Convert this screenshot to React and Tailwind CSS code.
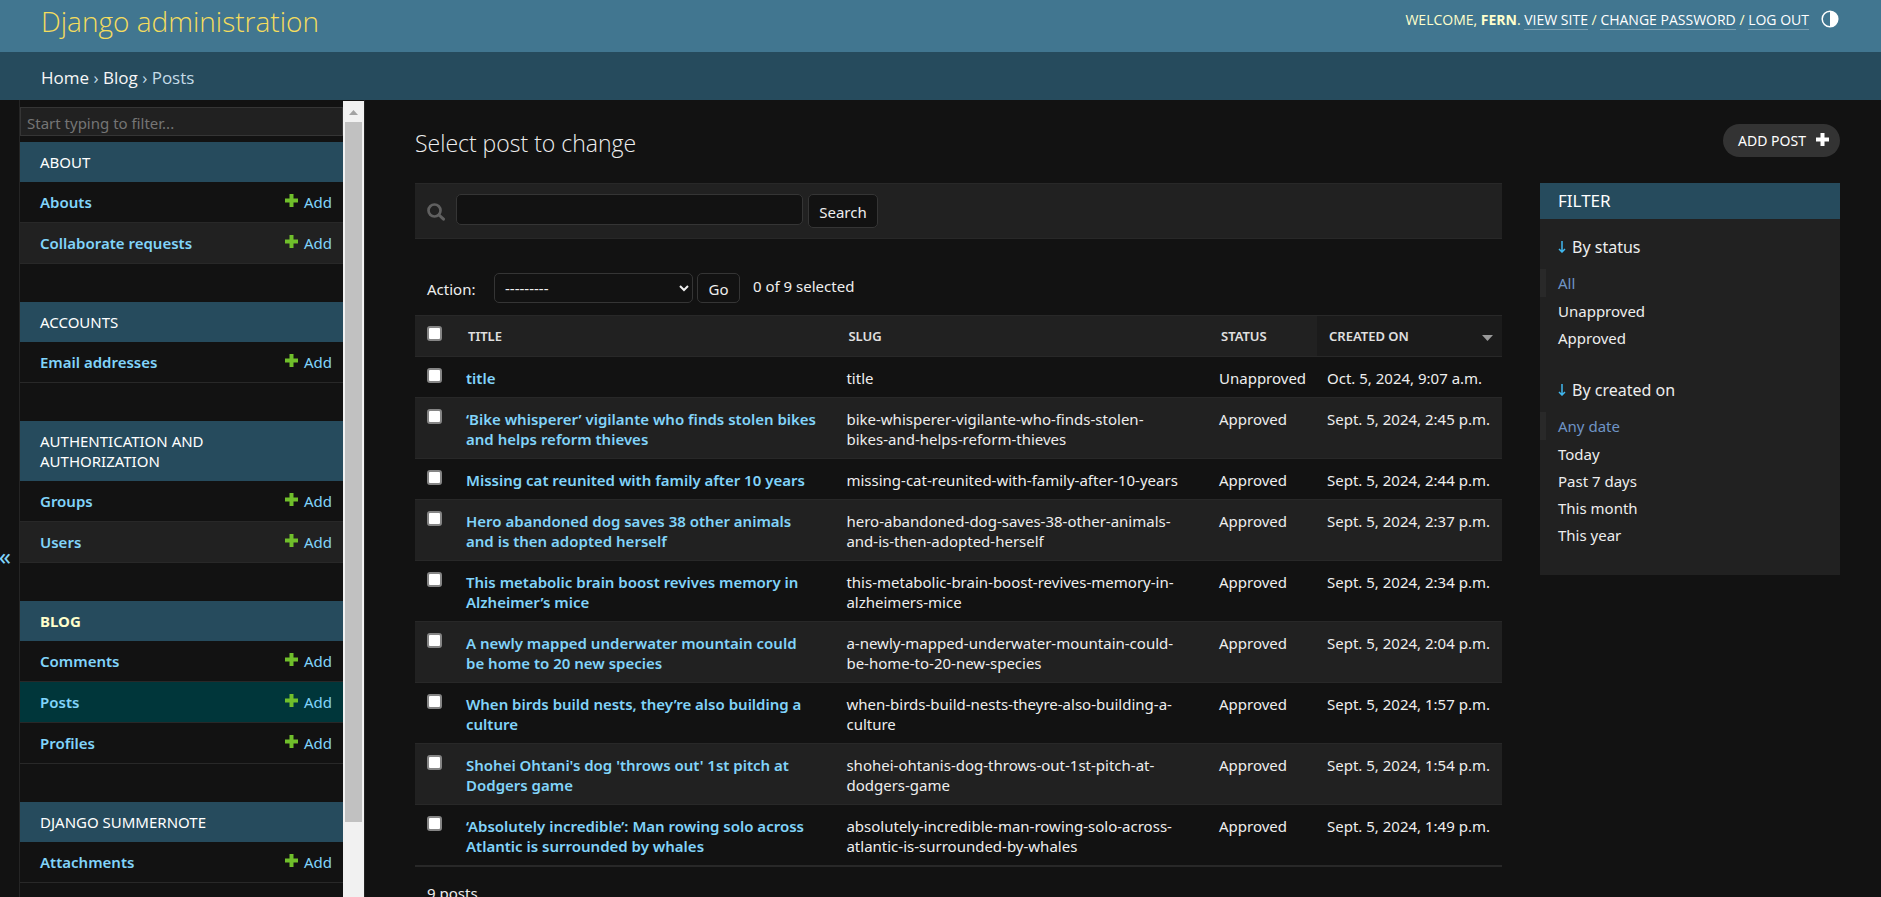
import React from "react";

const apps = [
  { name: "About", models: ["Abouts", "Collaborate requests"] },
  { name: "Accounts", models: ["Email addresses"] },
  { name: "Authentication and Authorization", models: ["Groups", "Users"] },
  { name: "Blog", models: ["Comments", "Posts", "Profiles"], current: true },
  { name: "Django Summernote", models: ["Attachments"] },
];

const posts = [
  ["title", "title", "Unapproved", "Oct. 5, 2024, 9:07 a.m."],
  ["‘Bike whisperer’ vigilante who finds stolen bikes and helps reform thieves", "bike-whisperer-vigilante-who-finds-stolen-bikes-and-helps-reform-thieves", "Approved", "Sept. 5, 2024, 2:45 p.m."],
  ["Missing cat reunited with family after 10 years", "missing-cat-reunited-with-family-after-10-years", "Approved", "Sept. 5, 2024, 2:44 p.m."],
  ["Hero abandoned dog saves 38 other animals and is then adopted herself", "hero-abandoned-dog-saves-38-other-animals-and-is-then-adopted-herself", "Approved", "Sept. 5, 2024, 2:37 p.m."],
  ["This metabolic brain boost revives memory in Alzheimer’s mice", "this-metabolic-brain-boost-revives-memory-in-alzheimers-mice", "Approved", "Sept. 5, 2024, 2:34 p.m."],
  ["A newly mapped underwater mountain could be home to 20 new species", "a-newly-mapped-underwater-mountain-could-be-home-to-20-new-species", "Approved", "Sept. 5, 2024, 2:04 p.m."],
  ["When birds build nests, they’re also building a culture", "when-birds-build-nests-theyre-also-building-a-culture", "Approved", "Sept. 5, 2024, 1:57 p.m."],
  ["Shohei Ohtani's dog 'throws out' 1st pitch at Dodgers game", "shohei-ohtanis-dog-throws-out-1st-pitch-at-dodgers-game", "Approved", "Sept. 5, 2024, 1:54 p.m."],
  ["‘Absolutely incredible’: Man rowing solo across Atlantic is surrounded by whales", "absolutely-incredible-man-rowing-solo-across-atlantic-is-surrounded-by-whales", "Approved", "Sept. 5, 2024, 1:49 p.m."],
];

const filters = [
  { title: "By status", options: ["All", "Unapproved", "Approved"] },
  { title: "By created on", options: ["Any date", "Today", "Past 7 days", "This month", "This year"] },
];

function Plus({ className }) {
  return (
    <svg className={className} viewBox="0 0 13 13" aria-hidden="true">
      <path d="M4.500 0h4v4.500H13v4H8.500V13h-4V8.500H0v-4h4.500z" fill="currentColor" />
    </svg>
  );
}

function Header() {
  const link = "border-b border-white/30 text-white hover:border-white";
  return (
    <header className="flex h-[52px] shrink-0 items-start justify-between bg-[#417690] pr-[42px] pl-[41px] text-[#ffc]">
      <h1 className="font-['Open_Sans',sans-serif] text-[28px] leading-[42px] font-light text-[#f5dd5d]">
        <a href="#home">Django administration</a>
      </h1>
      <div className="flex items-center pt-[10px] font-['Open_Sans',sans-serif] text-[14px] leading-[17px] uppercase">
        <div>
          Welcome, <strong className="font-bold">Fern</strong>. <a className={link} href="#site">View site</a> / <a className={link} href="#password">Change password</a> / <a className={link} href="#logout">Log out</a>
        </div>
        <button type="button" aria-label="Toggle theme" className="ml-3 text-white">
          <svg className="size-[18px]" viewBox="0 0 18 18" aria-hidden="true">
            <circle cx="9" cy="9" r="7.800" fill="none" stroke="currentColor" strokeWidth="1.500" />
            <path d="M9 1.200a7.800 7.800 0 0 1 0 15.600z" fill="currentColor" />
          </svg>
        </button>
      </div>
    </header>
  );
}

function Sidebar() {
  return (
    <div className="flex w-[365px] shrink-0 overflow-hidden border-r border-[#252525]">
      <button type="button" aria-label="Toggle navigation" className="flex w-5 shrink-0 items-center justify-end border-r border-[#252525] pr-2 pt-[114px] text-[24px] text-[#81d4fa]">
        «
      </button>
      <nav aria-label="Sidebar" className="min-w-0 flex-1 overflow-hidden">
        <input type="search" aria-label="Filter navigation items" placeholder="Start typing to filter..." className="mt-[7px] mb-[6px] block h-[29px] w-full border border-[#353535] bg-[#212121] px-[6px] pt-[2px] text-[15px] text-[#eee] placeholder:text-[#757575]" />
        {apps.map((app) => (
          <section key={app.name} className="mb-[38px]">
            <h2 className={"bg-[#264b5d] px-5 py-[10px] text-[15px] leading-5 uppercase " + (app.current ? "font-bold text-[#ffc]" : "text-white")}>
              <a href="#app" className="block max-w-[220px]">{app.name}</a>
            </h2>
            <ul>
              {app.models.map((m, i) => (
                <li key={m} className={"flex items-center justify-between border-b border-[#282828] pr-[11px] pl-5 text-[15px] leading-[40px] text-[#81d4fa] " + (m === "Posts" ? "bg-[#00363a]" : i === 1 ? "bg-[#212121]" : "")}>
                  <a href="#model" className="font-semibold">{m}</a>
                  <a href="#add" className="flex items-center gap-[6px]">
                    <Plus className="mb-1 size-[13px] text-[#70bf2b]" />
                    Add
                  </a>
                </li>
              ))}
            </ul>
          </section>
        ))}
      </nav>
      <div aria-hidden="true" className="mt-px flex w-[21px] shrink-0 flex-col items-center bg-[#f1f1f1]">
        <svg className="h-[21px] w-[21px] shrink-0" viewBox="0 0 21 21"><path d="M6 14l4.500-5 4.500 5z" fill="#a3a3a3" /></svg>
        <div className="h-[88%] w-[17px] bg-[#c1c1c1]" />
      </div>
    </div>
  );
}

function Changelist() {
  const th = "px-3 text-left font-semibold";
  const td = "px-[10px] pt-[11px] pb-[9px]";
  const check = "block size-[15px] appearance-none rounded-[3px] border-2 border-[#858585] bg-white checked:bg-[#417690]";
  return (
    <div className="min-w-0 flex-1">
      <form className="flex h-[56px] items-start border-y border-[#282828] bg-[#212121] pt-[10px] pl-3">
        <label htmlFor="searchbar" aria-label="Search posts" className="mt-[9px] mr-[11px] text-[#606060]">
          <svg className="size-[18px]" viewBox="0 0 18 18" fill="none" stroke="currentColor" aria-hidden="true">
            <circle cx="7.500" cy="7.500" r="6" strokeWidth="2.700" />
            <path d="M12 12l4.500 4.200" strokeWidth="3" strokeLinecap="round" />
          </svg>
        </label>
        <input id="searchbar" type="text" className="h-[31px] w-[347px] rounded-[5px] border border-[#353535] bg-[#121212] px-2 text-[15px]" />
        <button type="submit" className="ml-[5px] h-[34px] w-[70px] rounded-[5px] border border-[#353535] bg-[#121212] pt-[2px] text-[15px]">Search</button>
      </form>
      <div className="flex h-[76px] items-start pt-[34px] pl-3 text-[15px] leading-[26px]">
        <label htmlFor="action" className="w-[67px] pt-[3px]">Action:</label>
        <select id="action" className="h-[30px] w-[199px] rounded-[5px] border border-[#353535] bg-[#121212] pl-[6px] text-[15px]">
          <option>---------</option>
          <option>Delete selected posts</option>
        </select>
        <button type="button" className="ml-1 h-[30px] w-[43px] rounded-[5px] border border-[#353535] bg-[#121212] pt-px">Go</button>
        <span className="ml-[13px]">0 of 9 selected</span>
      </div>
      <table className="w-full table-fixed border-collapse border-b-2 border-[#282828] text-[15px] leading-5">
        <colgroup>
          <col className="w-[41px]" />
          <col className="w-[35%]" />
          <col />
          <col className="w-[108px]" />
          <col className="w-[185px]" />
        </colgroup>
        <thead>
          <tr className="h-[41px] border-y border-[#282828] bg-[#212121] text-[13px] text-[#e0e0e0] uppercase">
            <th className="px-3 pb-[6px]"><input type="checkbox" aria-label="Select all posts" className={check} /></th>
            <th className={th}><a href="#title">Title</a></th>
            <th className={th}><a href="#slug">Slug</a></th>
            <th className={th}><a href="#status">Status</a></th>
            <th className={th + " bg-[#1b1b1b]"}>
              <div className="flex items-center justify-between">
                <a href="#created">Created on</a>
                <svg className="mt-[3px] mr-[-3px] h-[6px] w-[11px]" viewBox="0 0 11 6" aria-hidden="true"><path d="M0 0h11L5.500 6z" fill="#999" /></svg>
              </div>
            </th>
          </tr>
        </thead>
        <tbody>
          {posts.map(([title, slug, status, created], i) => (
            <tr key={slug} className={"border-t border-[#282828] align-top " + (i % 2 ? "bg-[#212121]" : "")}>
              <td className="px-3 py-[11px]"><input type="checkbox" aria-label={"Select " + title} className={check} /></td>
              <th className={td + " text-left font-semibold text-[#81d4fa]"}><a href="#post" className="block max-w-[351px]">{title}</a></th>
              <td className={td}><div className="max-w-[336px]">{slug}</div></td>
              <td className="pt-[11px] pb-[9px] pl-[10px]">{status}</td>
              <td className="pt-[11px] pb-[9px] pl-[10px] whitespace-nowrap">{created}</td>
            </tr>
          ))}
        </tbody>
      </table>
      <p className="pt-4 pl-3 text-[15px] leading-5">9 posts</p>
    </div>
  );
}

function FilterPanel() {
  return (
    <aside className="w-[300px] shrink-0 bg-[#212121] pb-[26px]">
      <h2 className="bg-[#264b5d] px-[18px] text-[17px] leading-[36px] text-white uppercase">Filter</h2>
      {filters.map((f, n) => (
        <details key={f.title} open className={n ? "mt-[25px]" : "mt-[15px]"}>
          <summary className="flex list-none items-center gap-[6px] px-[18px] text-[16px] leading-[26px]">
            <svg className="h-3 w-[8px] text-[#40b8f0]" viewBox="0 0 8 12" fill="none" stroke="currentColor" aria-hidden="true">
              <path d="M4 0v11M1 8l3 3 3-3" strokeWidth="1.500" />
            </svg>
            {f.title}
          </summary>
          <ul className="mt-[9px] text-[15px]">
            {f.options.map((o, i) => (
              <li key={o} className={i ? "border-l-[6px] border-transparent pl-3 leading-[27px]" : "mb-px border-l-[6px] border-[#292929] pl-3 leading-7 text-[#6f94c6]"}>
                <a href="#filter">{o}</a>
              </li>
            ))}
          </ul>
        </details>
      ))}
    </aside>
  );
}

export default function App() {
  return (
    <div className="flex h-screen flex-col overflow-hidden bg-[#121212] font-['Noto_Sans','Open_Sans',sans-serif] text-[#eee]">
      <Header />
      <div className="h-12 shrink-0 bg-[#264b5d] pt-[2px] pl-[41px] font-['Open_Sans',sans-serif] text-[17px] leading-[48px] text-[#c4dce8]">
        <a href="#home" className="text-[#f7f7f7]">Home</a> › <a href="#blog" className="text-[#f7f7f7]">Blog</a> › Posts
      </div>
      <div className="flex min-h-0 flex-1">
        <Sidebar />
        <main className="min-w-0 flex-1 pt-6 pr-[41px] pl-[50px]">
          <div className="flex h-[59px] items-start justify-between">
            <h1 className="pt-[3px] font-['Open_Sans',sans-serif] text-[23px] leading-[32px] font-light">Select post to change</h1>
            <a href="#add" className="flex h-[33px] items-center gap-[10px] rounded-full bg-[#333] pr-[11px] pl-[15px] text-[14px] text-white uppercase">
              Add post
              <Plus className="mb-[2px] size-[13px]" />
            </a>
          </div>
          <div className="flex items-start gap-[38px]">
            <Changelist />
            <FilterPanel />
          </div>
        </main>
      </div>
    </div>
  );
}
